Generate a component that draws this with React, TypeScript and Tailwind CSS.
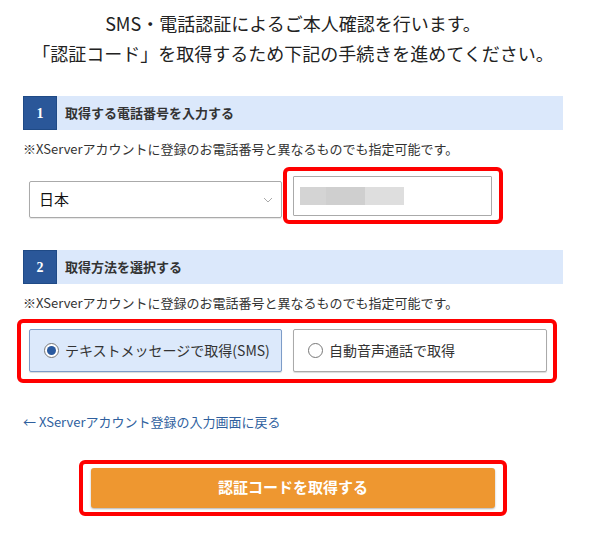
import React, { useState } from "react";

const jp = "font-['Meiryo','Noto_Sans_CJK_JP',sans-serif]";

const SectionHeader: React.FC<{ num: string; title: string }> = ({ num, title }) => (
  <div className="flex h-[34px] items-stretch bg-[#dbe8fb]">
    <div className="flex w-[34px] items-center justify-center border border-[#1f4a86] bg-[#2a5799] text-[14px] font-bold text-white font-['Liberation_Serif',serif]">
      {num}
    </div>
    <div className="flex items-center pl-[8px] text-[13px] font-bold text-[#333]">{title}</div>
  </div>
);

const Radio: React.FC<{ checked: boolean }> = ({ checked }) => (
  <span className="flex h-[15px] w-[15px] items-center justify-center rounded-full border border-[#777] bg-white">
    {checked && <span className="h-[9px] w-[9px] rounded-full bg-[#2a5a9f]" />}
  </span>
);

const App: React.FC = () => {
  const [method, setMethod] = useState<"sms" | "voice">("sms");

  return (
    <div className={`h-[534px] w-[590px] bg-white ${jp} text-[#333]`}>
      <div className="pl-[23px] pr-[27px] pt-[8px]">
        {/* Heading */}
        <div className="text-center text-[18px] leading-[30px] text-[#222]">
          <p>SMS・電話認証によるご本人確認を行います。</p>
          <p>「認証コード」を取得するため下記の手続きを進めてください。</p>
        </div>

        {/* Step 1 */}
        <div className="mt-[28px]">
          <SectionHeader num="1" title="取得する電話番号を入力する" />
          <p className="mt-[10px] text-[13px] leading-[18px]">
            ※XServerアカウントに登録のお電話番号と異なるものでも指定可能です。
          </p>
          <div className="mt-[9px] flex items-start pl-[6px]">
            <div className="mt-[14px] flex h-[37px] w-[253px] items-center justify-between rounded-[2px] border border-[#aaa] pl-[9px] pr-[8px] shadow-[0_1px_1px_rgba(0,0,0,0.1)]">
              <span className="text-[15px] text-[#111]">日本</span>
              <svg width="10" height="6" viewBox="0 0 10 6" fill="none" stroke="#aaa" strokeWidth="1">
                <path d="M1 1l4 4 4-4" />
              </svg>
            </div>
            <div className="ml-[1px] rounded-[6px] border-4 border-[#ff0000] pl-[6px] pr-[7px] pt-[5px] pb-[4px]">
              <div className="flex h-[40px] w-[199px] items-center rounded-[1px] border border-[#aaa] bg-white px-[6px]">
                <div className="flex h-[18px] w-[104px]">
                  <div className="w-[26px] bg-[#d4d4d4]" />
                  <div className="w-[39px] bg-[#cfcfcf]" />
                  <div className="w-[39px] bg-[#dedede]" />
                </div>
              </div>
            </div>
          </div>
        </div>

        {/* Step 2 */}
        <div className="mt-[26px]">
          <SectionHeader num="2" title="取得方法を選択する" />
          <p className="mt-[10px] text-[13px] leading-[18px]">
            ※XServerアカウントに登録のお電話番号と異なるものでも指定可能です。
          </p>
          <div className="-ml-[6px] mt-[7px] w-[540px] rounded-[6px] border-4 border-[#ff0000] pl-[8px] pr-[6px] pt-[6px] pb-[7px]">
            <div className="flex gap-[11px]">
              <button
                onClick={() => setMethod("sms")}
                className={`flex h-[43px] w-[253px] items-center gap-[6px] rounded-[2px] border pl-[14px] text-[14px] shadow-[0_1px_1px_rgba(0,0,0,0.15)] ${
                  method === "sms" ? "border-[#7d9cc8] bg-[#dce9fb]" : "border-[#aaa] bg-white"
                }`}
              >
                <Radio checked={method === "sms"} />
                <span>テキストメッセージで取得(SMS)</span>
              </button>
              <button
                onClick={() => setMethod("voice")}
                className={`flex h-[43px] w-[254px] items-center gap-[6px] rounded-[2px] border pl-[14px] text-[14px] shadow-[0_1px_1px_rgba(0,0,0,0.15)] ${
                  method === "voice" ? "border-[#7d9cc8] bg-[#dce9fb]" : "border-[#aaa] bg-white"
                }`}
              >
                <Radio checked={method === "voice"} />
                <span>自動音声通話で取得</span>
              </button>
            </div>
          </div>
        </div>

        {/* Back link */}
        <a href="#" className="mt-[29px] block text-[13px] text-[#2f5f9e]">
          ← XServerアカウント登録の入力画面に戻る
        </a>

        {/* Submit */}
        <div className="mt-[28px] flex justify-center">
          <div className="rounded-[6px] border-4 border-[#ff0000] px-[8px] pt-[4px] pb-[4px]">
            <button className="flex h-[40px] w-[404px] items-center justify-center rounded-[3px] bg-[#ee9730] text-[15px] font-bold text-white shadow-[0_1px_2px_rgba(0,0,0,0.3)]">
              認証コードを取得する
            </button>
          </div>
        </div>
      </div>
    </div>
  );
};

export default App;
